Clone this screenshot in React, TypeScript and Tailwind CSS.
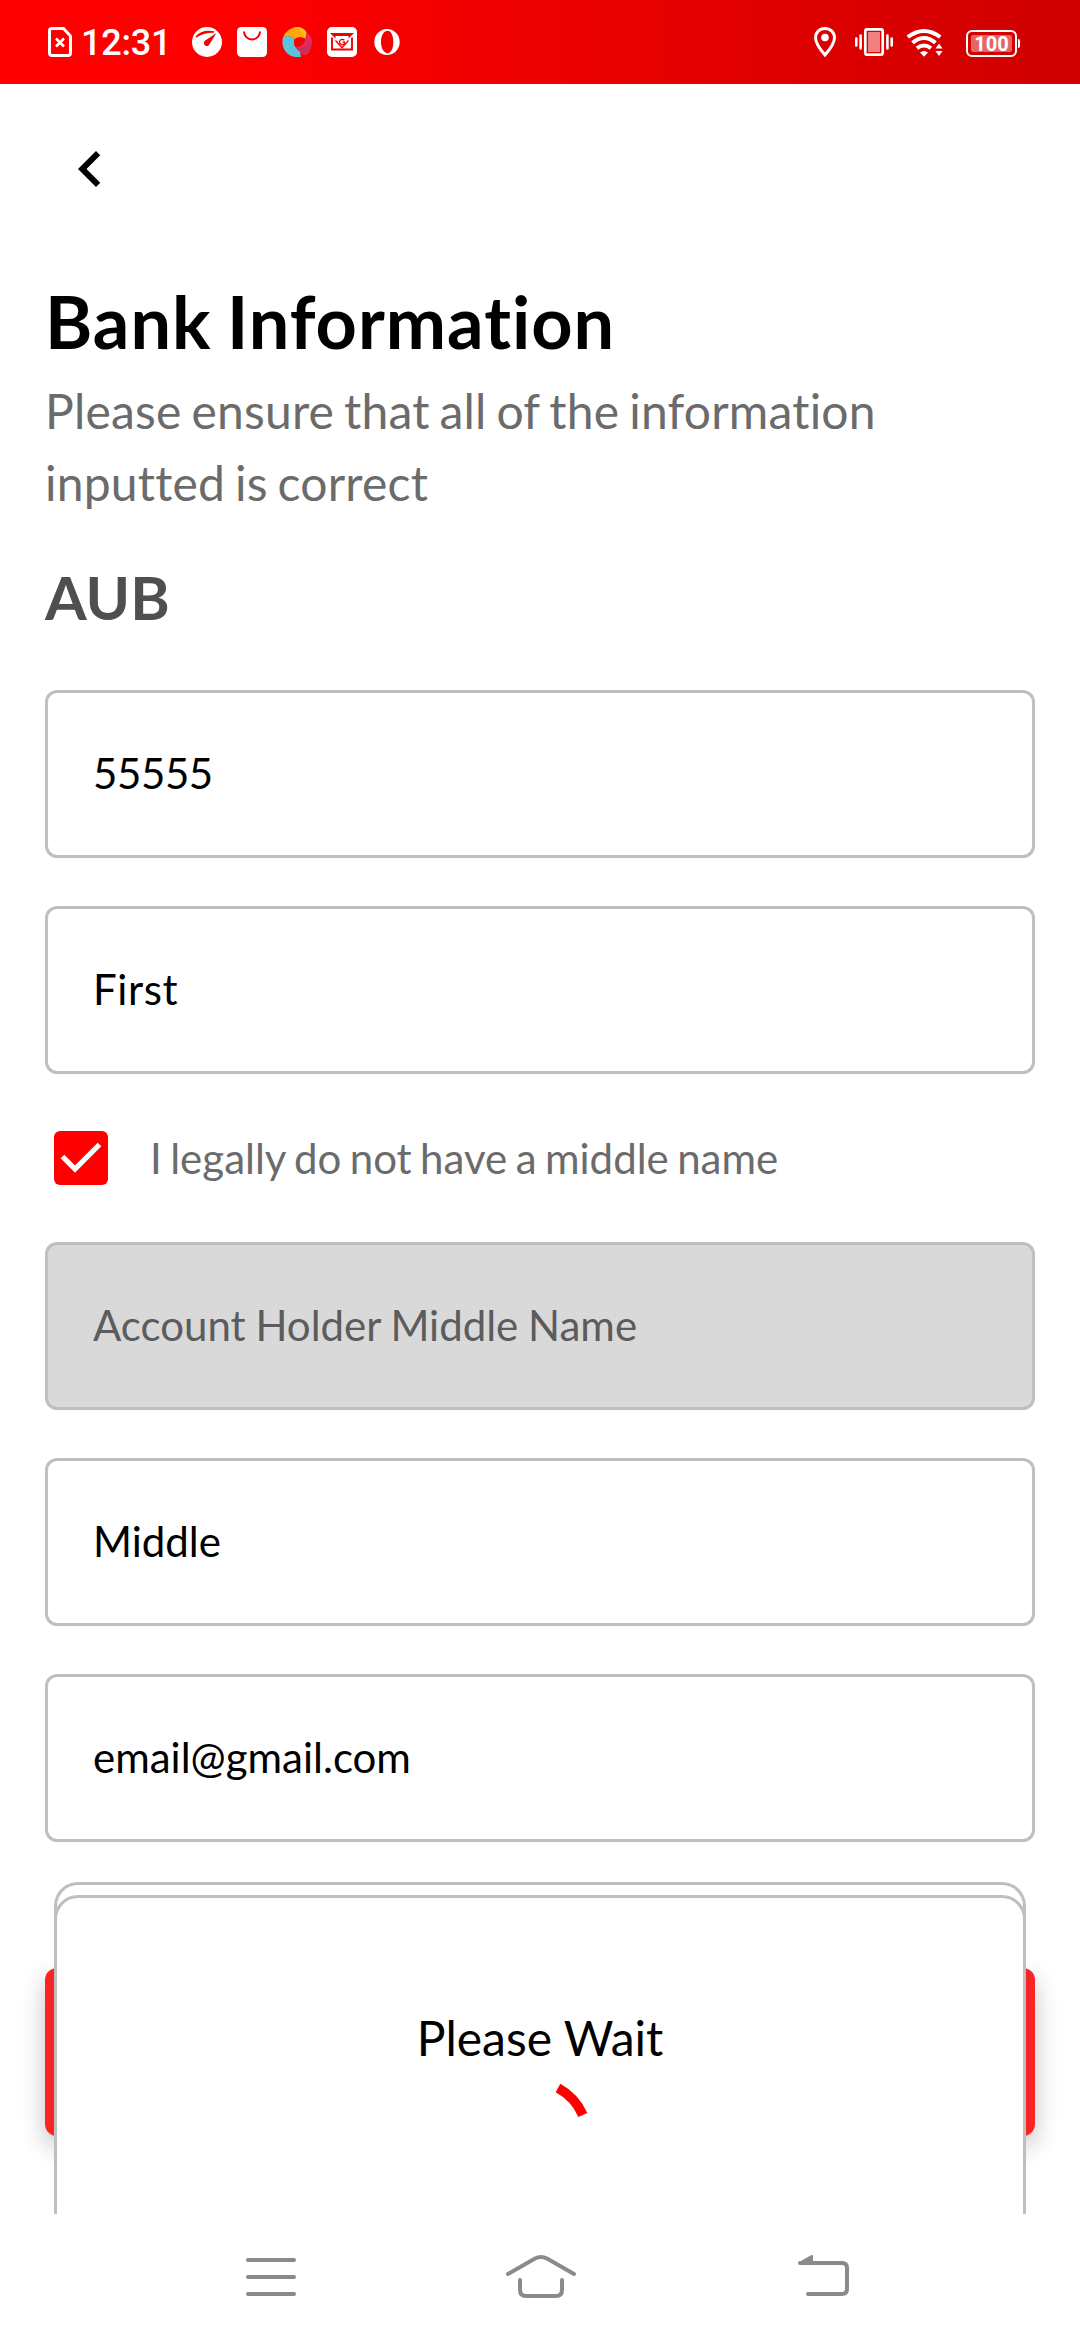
import type { ReactNode } from "react";

function StatusBar() {
  return (
    <header className="flex h-[84px] shrink-0 items-start bg-gradient-to-r from-[#ff0000] from-20% to-[#cf0000] pl-12 pr-[60px] text-white">
      <svg className="mt-[27px] h-[30px] w-6" viewBox="0 0 24 30" fill="none" stroke="white">
        <path d="M4 1.5H15.5L22.5 9V26Q22.5 28.5 20 28.5H4Q1.5 28.5 1.5 26V4Q1.5 1.5 4 1.5Z" strokeWidth="3" />
        <path d="M8 11.500L16 19.500M16 11.500L8 19.500" strokeWidth="2.6" />
      </svg>
      <span className="ml-[9px] mt-[22px] w-[90px] font-['Roboto'] text-[36px] leading-[42px] font-medium tracking-[-0.2px] whitespace-nowrap">12:31</span>
      <svg className="ml-[21px] mt-[27px] size-[30px]" viewBox="0 0 30 30">
        <circle cx="15" cy="15" r="15" fill="white" />
        <path d="M4 10Q10 3 22 5Q12 4.500 4 10Z" fill="#f80000" stroke="#f80000" strokeWidth="1.500" />
        <path d="M24.5 6L17.8 16.8A3 3 0 1 1 13.2 13.5Z" fill="#f80000" />
      </svg>
      <svg className="ml-[15px] mt-[27px] size-[30px]" viewBox="0 0 30 30">
        <rect width="30" height="30" rx="4.5" fill="white" />
        <path d="M7 4.5A8 8 0 0 0 23 4.5" fill="none" stroke="#f80000" strokeWidth="2" />
      </svg>
      <svg className="ml-[15px] mt-[27px] size-[30px]" viewBox="0 0 30 30">
        <path d="M1 10Q6 0 16 0Q23 1 24.500 6L23.500 12Q18 8 12.500 12Q8 7 1 10Z" fill="#ffa70f" />
        <path d="M10 1Q20 1 23 11L24.500 5.500Q21 0 15 0Z" fill="#ffbe1e" />
        <path d="M24.500 5.500Q30 9 30 16Q29 25 24 28Q17 27 13 20Q21 21 23.500 12Z" fill="#e62a5c" />
        <path d="M30 14Q24 23 14 20.500Q18 27 25 27Q29 23 30 14Z" fill="#c9305f" />
        <path d="M1 10Q8 7 12.500 12Q10 19 18 25L19 30Q9 31 4 25Q-1 19 1 10Z" fill="#5cc3dd" />
      </svg>
      <svg className="ml-[15px] mt-[27px] size-[30px]" viewBox="0 0 30 30">
        <rect width="30" height="30" rx="5" fill="white" />
        <path d="M3 6H27L21.500 11.500V9H8.500V11.500Z" fill="#f20000" />
        <g fill="none" stroke="#f20000">
          <path d="M5 10.500V22.500H25V10.500" strokeWidth="1.900" />
          <path d="M8.500 13.500L15 20.800L21.500 13.500" strokeWidth="1.300" />
          <path d="M17.300 13.200A2.700 2.700 0 1 0 17.500 16.500V15.200H15.500" strokeWidth="1.300" />
        </g>
      </svg>
      <svg className="ml-[17px] mt-[29px] h-[26px] w-[26px]" viewBox="0 0 26 26">
        <path fillRule="evenodd" fill="white" d="M13 0A12.700 13 0 1 1 13 26A12.700 13 0 1 1 13 0ZM13.500 1.800C10 1.800 7 6.500 7 13S10 24.200 13.500 24.200S19.300 19.500 19.300 13S17 1.800 13.500 1.800Z" />
      </svg>
      <svg className="ml-auto mt-[27px] h-[30px] w-[22px]" viewBox="0 0 22 30">
        <path d="M11 1.500C5.500 1.500 1.500 5.500 1.500 10.800C1.500 17 11 28 11 28S20.500 17 20.500 10.800C20.500 5.500 16.500 1.500 11 1.500Z" fill="none" stroke="white" strokeWidth="3" />
        <circle cx="11" cy="10.500" r="3.800" fill="white" />
      </svg>
      <svg className="ml-[19px] mt-[28px] h-7 w-[38px]" viewBox="0 0 38 28">
        <rect x="10.300" y="1.300" width="17.400" height="25.400" rx="2" fill="none" stroke="white" strokeWidth="2.700" />
        <rect x="13" y="4" width="12" height="20" fill="white" opacity=".5" />
        <path d="M1.300 10.500V17.500M5.600 7.500V20.500M32.400 7.500V20.500M36.700 10.500V17.500" stroke="white" strokeWidth="2.600" strokeLinecap="round" />
      </svg>
      <svg className="ml-[13px] mt-[28px] h-[29px] w-[37px]" viewBox="0 0 37 29">
        <g fill="none" stroke="white" strokeWidth="4">
          <path d="M1.800 9Q18 -3 34.200 9" />
          <path d="M6.500 14.800Q18 5.200 29.500 14.800" />
          <path d="M11 20.300Q18 14.700 25 20.300" />
        </g>
        <path d="M14 24.500Q18 21.500 22 24.500L18 28.700Z" fill="white" />
        <path d="M29.500 20.500L33 15.500L36.500 20.500ZM29.500 23L33 28L36.500 23Z" fill="white" />
      </svg>
      <div className="ml-[23px] mt-[30px] flex items-center">
        <div className="flex h-[27px] w-[51px] rounded-[6px] border-2 border-white p-[3px]">
          <div className="flex flex-1 items-center justify-center rounded-[2px] bg-white/40 font-['Roboto'] text-[20px] leading-none font-bold">100</div>
        </div>
        <div className="ml-px h-[9px] w-[2px] rounded-r bg-white" />
      </div>
    </header>
  );
}

function Field({ children, disabled = false }: { children: ReactNode; disabled?: boolean }) {
  return (
    <div
      className={
        disabled
          ? "flex h-[168px] shrink-0 items-center rounded-[12px] border-[3px] border-[#bfbfbf] bg-[#d9d9d9] pb-px pl-[45px] text-[42px] [word-spacing:-1px] text-[#5c5c5c]"
          : "flex h-[168px] shrink-0 items-center rounded-[12px] border-[3px] border-[#bfbfbf] bg-white pb-px pl-[45px] text-[42px] text-black"
      }
    >
      {children}
    </div>
  );
}

function WaitSheet() {
  return (
    <div className="absolute inset-x-[54px] top-[1882px] h-[332px] overflow-hidden rounded-t-[24px] border-x-[3px] border-t-[3px] border-[#bfbfbf] bg-white">
      <div className="-mx-[3px] mt-[10px] flex h-[340px] flex-col items-center rounded-t-[24px] border-[3px] border-[#bfbfbf] pt-[108px]">
        <p className="text-[48px] leading-[64px] text-black">Please Wait</p>
        <svg className="mt-[6px] h-[60px] w-[108px]" viewBox="486 2076 108 60">
          <path d="M558 2088A56.500 56.500 0 0 1 582.800 2115" fill="none" stroke="#ff0000" strokeWidth="9.800" />
        </svg>
      </div>
    </div>
  );
}

function NavBar() {
  return (
    <nav className="flex h-[126px] shrink-0 items-start bg-white pt-[37px]">
      <svg className="ml-[242px] h-[54px] w-[58px]" viewBox="242 2251 58 54" fill="none" stroke="#8a8a8a" strokeWidth="4" strokeLinecap="round">
        <path d="M248 2260H294M248 2277H294M248 2294H294" />
      </svg>
      <svg className="ml-[202px] h-[54px] w-[78px]" viewBox="502 2251 78 54" fill="none" stroke="#8a8a8a" strokeWidth="4" strokeLinecap="round">
        <path d="M508 2274L535 2258.500Q541 2255.500 547 2258.500L574 2274" />
        <path d="M520 2280V2290Q520 2296 526 2296H556Q562 2296 562 2290V2280" />
      </svg>
      <svg className="ml-[214px] h-[54px] w-[60px]" viewBox="794 2251 60 54" fill="none" stroke="#8a8a8a" strokeWidth="4" strokeLinecap="round">
        <path d="M800 2263H842Q847 2263 847 2268V2289Q847 2294 842 2294H808" />
        <path d="M798 2263.500Q798 2262.500 811 2255.200Q813 2254.500 813 2256V2264.500Z" fill="#8a8a8a" stroke="none" />
      </svg>
    </nav>
  );
}

export default function App() {
  return (
    <div className="relative flex h-[2340px] w-[1080px] flex-col overflow-hidden bg-white font-['Lato',sans-serif] [font-variant-ligatures:none]">
      <StatusBar />
      <main className="flex h-[2130px] shrink-0 flex-col overflow-hidden px-[45px]">
        <button aria-label="Back" className="ml-[9px] mt-[49px] size-[72px] shrink-0">
          <svg viewBox="0 0 24 24" className="size-[72px]">
            <path d="M15.410 16.590L10.830 12l4.580-4.590L14 6l-6 6 6 6 1.410-1.410z" />
          </svg>
        </button>
        <h1 className="mt-[71px] text-[72px] leading-[90px] font-bold tracking-[1px] [word-spacing:-3px] text-black">Bank Information</h1>
        <p className="mt-[9px] w-[960px] text-[48px] leading-[72px] tracking-[0.2px] [word-spacing:-2.600px] text-[#6b6b6b]">
          Please ensure that all of the information
          <br />
          inputted is correct
        </p>
        <h2 className="mt-[42px] text-[60px] leading-[72px] font-bold text-[#4f4f4f]">AUB</h2>
        <div className="mt-[57px] flex flex-col gap-12">
          <Field>
            <span className="tracking-[-0.4px]">55555</span>
          </Field>
          <Field>
            <span className="tracking-[0.6px]">First</span>
          </Field>
        </div>
        <label className="my-[57px] ml-[9px] flex h-[54px] shrink-0 items-center text-[42px] [word-spacing:-2.300px] text-[#6b6b6b]">
          <span className="mr-[42px] size-[54px] rounded-[6px] bg-[#ff0000]">
            <svg viewBox="0 0 54 54" className="size-[54px]">
              <path d="M8.500 25.500L21 38L45.500 13.500" fill="none" stroke="white" strokeWidth="5.200" />
            </svg>
          </span>
          I legally do not have a middle name
        </label>
        <div className="flex flex-col gap-12">
          <Field disabled>Account Holder Middle Name</Field>
          <Field>Middle</Field>
          <Field>email@gmail.com</Field>
        </div>
        <div className="mt-[126px] h-[168px] shrink-0 rounded-[12px] bg-[#fb2424] shadow-[0_10px_24px_rgba(0,0,0,0.24)]" />
      </main>
      <WaitSheet />
      <NavBar />
    </div>
  );
}
